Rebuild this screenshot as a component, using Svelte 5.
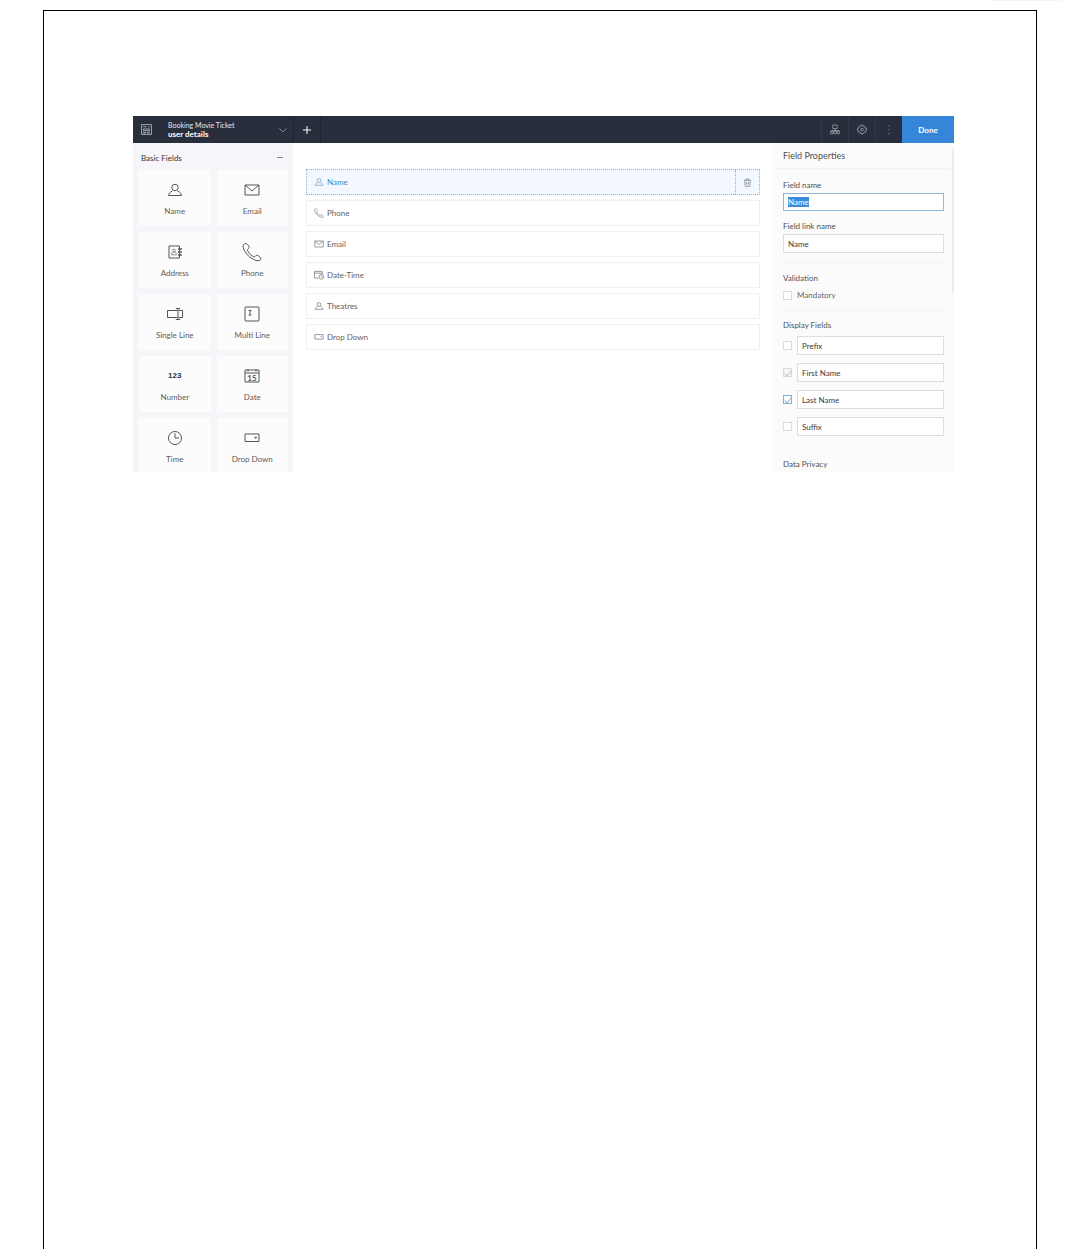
<script>
  import { onMount } from 'svelte';

  const palette = [
    ['user', 'Name'], ['mail', 'Email'],
    ['address', 'Address'], ['phone', 'Phone'],
    ['single', 'Single Line'], ['multi', 'Multi Line'],
    ['number', 'Number'], ['date', 'Date'],
    ['time', 'Time'], ['dropdown', 'Drop Down'],
  ];

  const fields = [
    ['user', 'Name'], ['phone', 'Phone'], ['mail', 'Email'],
    ['datetime', 'Date-Time'], ['user', 'Theatres'], ['dropdown', 'Drop Down'],
  ];

  let display = $state([
    { label: 'Prefix', on: false, locked: false },
    { label: 'First Name', on: true, locked: true },
    { label: 'Last Name', on: true, locked: false },
    { label: 'Suffix', on: false, locked: false },
  ]);
  let fieldName = $state('Name');
  let linkName = $state('Name');
  let mandatory = $state(false);
  let nameInput;

  onMount(() => {
    nameInput.focus();
    nameInput.select();
  });
</script>

{#snippet icon(name)}
  <svg class="icon" viewBox="0 0 20 20" aria-hidden="true">
    {#if name === 'user'}
      <circle cx="10" cy="7.5" r="3.2" />
      <path d="M7.500 11C5 12 3.800 13.500 3.500 15.500h13c-.3-2-1.500-3.500-4-4.500" />
    {:else if name === 'mail'}
      <path d="M3 5h14v10H3zM3 5l7 6 7-6" />
    {:else if name === 'address'}
      <path d="M4 4h10.500v12H4z" />
      <path d="M13 7h4M13 10h4M13 13h4" stroke-width="1.300" />
      <g opacity=".65"><circle cx="9" cy="8.500" r="1.400" /><path d="M6.500 12.800c0-2 1-2.800 2.500-2.800s2.500.8 2.500 2.800z" /></g>
    {:else if name === 'phone'}
      <path d="M2.300 1.800C.5 3 .8 6 3 9.500c2 3.300 5 6.300 8.500 8 3.200 1.600 6.300 1.800 7.300-.3.600-1.200-2.600-4.200-4.200-3.900-1.300.3-1.400 2-2.700 1.500C9.500 14 6 10.300 5.500 8.300c-.3-1.300 1.500-1.500 1.600-2.900C7.200 3.800 4.500.5 2.300 1.800z" />
    {:else if name === 'single'}
      <path d="M12.500 6.500H2.500v7h10M13.500 6.500h4v7h-4M10.800 4.500h4.400M10.800 15.500h4.400M13 4.500v11" />
    {:else if name === 'multi'}
      <rect x="3" y="3" width="14" height="14" rx=".6" />
      <path d="M6.500 6.500h3M6.500 11h3M8 6.500V11" />
    {:else if name === 'date'}
      <path d="M3 4h14v12H3zM3 7h14M6 3v2.500M14 3v2.500" />
      <text x="10" y="14.600">15</text>
    {:else if name === 'time'}
      <circle cx="10" cy="10" r="6.500" />
      <path d="M10 5.500V10h4" />
    {:else if name === 'dropdown'}
      <path d="M3 6h14v7.500H3z" />
      <path d="M12.500 9h2.400l-1.200 1.600z" fill="currentColor" stroke-width=".5" />
    {:else if name === 'datetime'}
      <path d="M9 15H2.500V4h13v4M2.500 6.800h13" />
      <circle cx="14" cy="13" r="4" /><path d="M14 11v2.300h2" />
    {:else if name === 'form'}
      <path d="M1 1h18v18H1zM4.500 9h11v3h-11zM4.500 15h4v1.500h-4zM11.500 15h4v1.500h-4zM4 5h6M13 5h3" />
    {:else if name === 'flow'}
      <path d="M5.500 1h9v7h-9zM10 8v4M3 13.500V12h14v1.500M1 13.500h5v5H1zM7.500 13.500h5v5h-5zM14 13.500h5v5h-5z" />
    {:else if name === 'gear'}
      <path d="M8.500 1h3l.6 2.600 2.300-1.300 2.300 2.300-1.300 2.300 3.600.6v5l-3.600.6 1.300 2.300-2.300 2.300-2.300-1.300-.6 2.600h-3l-.6-2.600-2.300 1.300-2.300-2.300 1.300-2.300L1 12.500v-5l3.600-.6-1.300-2.300 2.300-2.300 2.300 1.300z" />
      <circle cx="10" cy="10" r="2.500" />
    {:else if name === 'trash'}
      <path d="M2 5h16M7 5V2h6V5M4 5l1 13.500h10L16 5M8 9v5.500M12 9v5.500" />
    {:else if name === 'chevron'}
      <path d="M1 6l9 9 9-9" />
    {:else if name === 'plus'}
      <path d="M10 0v20M0 10h20" />
    {:else if name === 'dots'}
      <path d="M10 1v2.500M10 9v2.500M10 17v2.500" />
    {/if}
  </svg>
{/snippet}

<div class="top-edge"></div>
<div class="sheet">
  <div class="app">
    <header>
      <div class="form-picker">
        <span class="form-icon">{@render icon('form')}</span>
        <div class="titles"><span>Booking Movie Ticket</span><strong>user details</strong></div>
        <button class="chevron" aria-label="Switch form">{@render icon('chevron')}</button>
      </div>
      <button class="add" aria-label="Add form">{@render icon('plus')}</button>
      <nav>
        <button aria-label="Workflow">{@render icon('flow')}</button>
        <button aria-label="Settings">{@render icon('gear')}</button>
        <button aria-label="More">{@render icon('dots')}</button>
      </nav>
      <button class="done">Done</button>
    </header>

    <div class="workspace">
      <aside class="palette">
        <div class="palette-head">
          <h2>Basic Fields</h2>
          <button aria-label="Collapse"><span class="minus"></span></button>
        </div>
        <div class="cards">
          {#each palette as [kind, label]}
            <button class="card">
              <span class="glyph">{#if kind === 'number'}<b>123</b>{:else}{@render icon(kind)}{/if}</span>
              <span>{label}</span>
            </button>
          {/each}
        </div>
      </aside>

      <main>
        {#each fields as [kind, label], i}
          <div class="field" class:selected={i === 0}>
            <span class="field-icon" class:large={kind !== 'phone'}>{@render icon(kind)}</span>
            <span class="field-label">{label}</span>
            {#if i === 0}<button class="trash" aria-label="Delete field">{@render icon('trash')}</button>{/if}
          </div>
        {/each}
      </main>

      <aside class="props">
        <h1>Field Properties</h1>
        <div class="props-body">
          <section class="names">
            <label for="field-name">Field name</label>
            <input id="field-name" class="box active" type="text" bind:value={fieldName} bind:this={nameInput} />
            <label for="link-name">Field link name</label>
            <input id="link-name" class="box" type="text" bind:value={linkName} />
          </section>
          <section class="validation">
            <h3>Validation</h3>
            <label class="check-label"><input type="checkbox" bind:checked={mandatory} />Mandatory</label>
          </section>
          <section class="display">
            <h3>Display Fields</h3>
            {#each display as row}
              <div class="display-row">
                <input type="checkbox" aria-label={`Show ${row.label}`} bind:checked={row.on} disabled={row.locked} />
                <input class="box" type="text" aria-label={row.label} bind:value={row.label} />
              </div>
            {/each}
          </section>
          <h3>Data Privacy</h3>
        </div>
        <div class="scroll-shadow"></div>
      </aside>
    </div>
  </div>
</div>

<style>
  :global(body) { background: #fff; }
  * { box-sizing: border-box; }
  h1, h2, h3 { margin: 0; font-size: 8px; font-weight: 400; }
  button { padding: 0; border: 0; background: none; color: inherit; font: inherit; display: flex; align-items: center; justify-content: center; cursor: pointer; }
  input { margin: 0; font: inherit; color: inherit; }

  .top-edge { width: 72px; height: 1px; margin: 0 19px 9px auto; background: #f5f5f5; }
  .sheet { margin: 0 43px; padding: 105px 82px 0 89px; border: 1px solid #000; border-bottom: 0; min-height: calc(100vh - 10px); }
  .app { font: 8px/12px Lato, sans-serif; color: #4c4c4c; }
  .icon { display: block; width: 100%; height: 100%; overflow: visible; fill: none; stroke: currentColor; stroke-width: 1; }
  .icon text { font: 700 8px Lato, sans-serif; text-anchor: middle; fill: currentColor; stroke: none; }

  header { display: flex; height: 27px; background: #292e3d; color: #d6d8de; }
  .form-picker { display: flex; align-items: center; width: 161px; padding: 0 6px 0 8px; border-right: 1px solid #202532; }
  .form-icon { width: 11px; height: 11px; margin-right: 16px; color: #b9bcc5; }
  .form-icon :global(svg) { stroke-width: 1.500; }
  .titles { flex: 1; display: flex; flex-direction: column; font-size: 7px; line-height: 9px; color: #e6e7eb; white-space: nowrap; }
  .titles strong { font-size: 8px; color: #fff; }
  .chevron { width: 8px; height: 8px; color: #9599a4; }
  .chevron :global(svg) { stroke-width: 2; }
  .add { width: 27px; padding: 0 9px; color: #fff; border-right: 1px solid #202532; }
  .add :global(svg) { height: 10px; stroke-width: 2.500; }
  nav { display: flex; margin-left: auto; }
  nav button { width: 27px; padding: 0 8px; border-left: 1px solid #343949; }
  nav :global(svg) { height: 10px; stroke-width: 1.800; }
  .done { width: 52px; background: #3585d8; color: #fff; font-weight: 700; }

  .workspace { display: flex; }
  .palette { width: 160px; padding: 0 5px 0 6px; background: #f5f5fa; }
  .palette-head { display: flex; justify-content: space-between; align-items: center; height: 27px; padding: 2px 5px 0 2px; color: #333; }
  .minus { width: 6px; height: 1px; background: #888; }
  .cards { display: grid; grid-template-columns: 1fr 1fr; gap: 6px; }
  .card { flex-direction: column; justify-content: flex-start; height: 56px; padding-top: 10px; background: #fcfcfd; color: #5c5c5c; }
  .card:nth-last-child(-n + 2) { height: 54px; }
  .glyph { display: flex; align-items: center; justify-content: center; width: 20px; height: 20px; margin-bottom: 5px; color: #555; }
  .glyph b { font: 700 8px/12px "Liberation Sans", sans-serif; color: #333; }

  main { flex: 1; min-width: 0; padding: 26px 12px 0 13px; display: flex; flex-direction: column; gap: 5px; }
  .field { display: flex; align-items: center; height: 26px; padding-left: 7px; border: 1px solid #f0f0f0; background: #fff; color: #626262; }
  .field.selected { background: #f2f8fe; border: 1px dotted #8db3d2; color: #4189bd; }
  .field-icon { width: 10px; height: 10px; margin-right: 3px; color: #888; }
  .field-icon.large { width: 12px; height: 12px; margin: 0 2px 0 -1px; }
  .selected .field-icon { color: #7fabcc; }
  .field-icon :global(svg) { stroke-width: 1.400; }
  .field-label { flex: 1; }
  .trash { width: 24px; height: 100%; padding: 0 7px; color: #8a939c; border-left: 1px dotted #8db3d2; }
  .trash :global(svg) { height: 9px; stroke-width: 2; }

  .props { position: relative; width: 182px; background: #fbfbfb; color: #505050; }
  h1 { height: 26px; padding: 7px 11px 0; border-bottom: 1px solid #f4f4f4; font-size: 9px; line-height: 12px; }
  .props-body { padding: 0 10px 0 11px; }
  .names { display: flex; flex-direction: column; padding: 10px 0 9px; border-bottom: 1px solid #f2f2f2; }
  .names .box { margin: 2px 0 9px; }
  .names .box:last-child { margin-bottom: 0; }
  .box { width: 100%; min-width: 0; height: 19px; padding: 0 4px; border: 1px solid #dedede; border-radius: 0; background: #fff; color: #3c3c3c; outline: 0; }
  .box.active { height: 18px; border-color: #8fb9da; }
  .box::selection { background: #3c8bdc; color: #fff; }
  .validation { padding: 9px 0; border-bottom: 1px solid #f2f2f2; }
  .check-label { display: flex; align-items: center; gap: 5px; margin-top: 5px; color: #666; }
  input[type='checkbox'] { appearance: none; flex: none; display: grid; place-items: center; width: 9px; height: 9px; border: 1px solid #dcdcdc; background: #fff; }
  input[type='checkbox']:checked { border-color: #7fb0d4; }
  input[type='checkbox']:checked::before { content: ''; width: 3px; height: 6px; border: solid #8fb9d8; border-width: 0 1px 1px 0; transform: rotate(40deg); }
  input[type='checkbox']:disabled { border-color: #d9d9d9; background: #f6f6f6; }
  input[type='checkbox']:disabled::before { border-color: #c4c8cc; }
  .display { padding: 8px 0 22px; }
  .display h3 { margin-bottom: 5px; }
  .display-row { display: flex; align-items: center; gap: 5px; }
  .display-row + .display-row { margin-top: 8px; }
  .scroll-shadow { position: absolute; top: 6px; right: 0; width: 3px; height: 144px; background: linear-gradient(to right, #fbfbfb, #e2e2e2); }
</style>
